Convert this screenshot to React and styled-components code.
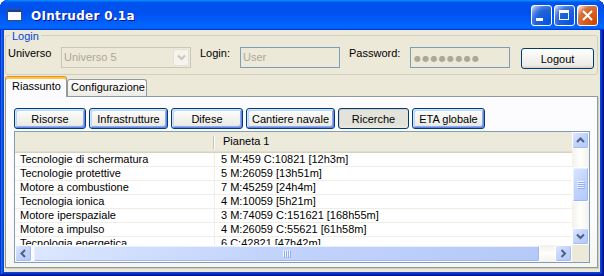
import styled, { createGlobalStyle } from 'styled-components';

const GlobalStyle = createGlobalStyle`
  html, body {
    margin: 0;
    padding: 0;
    background: #fff;
  }
  body {
    font-family: 'Liberation Sans', Arial, sans-serif;
    font-size: 11px;
    color: #000;
  }
`;

const Window = styled.div`
  width: 604px;
  height: 276px;
  box-sizing: border-box;
  display: flex;
  flex-direction: column;
  background: #0842d6;
  border-radius: 8px 8px 0 0;
  overflow: hidden;
  box-shadow: inset -1px -1px #00138c, inset 1px 1px #0831d9, inset -2px -2px #001ea0,
    inset 2px 2px #166aee, inset -3px -3px #003bda, inset 3px 3px #0855dd;
`;

const TitleBar = styled.div`
  height: 30px;
  flex: none;
  display: flex;
  align-items: center;
  padding: 0 6px 0 7px;
  border-radius: 8px 8px 0 0;
  background: linear-gradient(
    180deg,
    #0997ff,
    #0053ee 8%,
    #0050ee 40%,
    #06f 88%,
    #06f 93%,
    #005bff 95%,
    #003dd7 96%,
    #003dd7
  );
`;

const TitleText = styled.div`
  margin-left: 9px;
  margin-top: 1px;
  font-family: 'DejaVu Sans', sans-serif;
  font-weight: bold;
  font-size: 12px;
  color: #fff;
  text-shadow: 1px 1px #0f1089;
  letter-spacing: 0.3px;
`;

const Controls = styled.div`
  margin-left: auto;
  display: flex;
  gap: 2px;
`;

const CtrlBtn = styled.div`
  width: 21px;
  height: 21px;
  box-sizing: border-box;
  border: 1px solid #fff;
  border-radius: 3px;
  display: flex;
  background: ${({ danger }) =>
    danger
      ? 'radial-gradient(circle at 90% 90%, #cc4600 0%, #dc6527 55%, #cd7546 70%, #ffccb2 90%, #fff 100%)'
      : 'radial-gradient(circle at 90% 90%, #0054e9 0%, #2263d5 55%, #4479e4 70%, #a3bbec 90%, #fff 100%)'};
`;

const Client = styled.div`
  flex: 1;
  margin: 0 4px 4px;
  background: #ece9d8;
  display: flex;
  flex-direction: column;
  padding: 0 2px 0 1px;
`;

const Group = styled.div`
  margin-top: 5px;
  border: 1px solid #d0d0bf;
  border-radius: 3px;
  padding: 0 2px 5px;
`;

const GroupTitle = styled.div`
  width: fit-content;
  margin: -6px 0 0 2px;
  padding: 0 2px;
  background: #ece9d8;
  color: #0046d5;
  line-height: 13px;
`;

const Row = styled.div`
  display: flex;
  align-items: flex-start;
  height: 22px;
  margin-top: 4px;
`;

const Label = styled.div`
  width: ${({ w }) => w}px;
  margin-left: ${({ gap }) => gap || 0}px;
  line-height: 13px;
  color: #000;
`;

const Combo = styled.div`
  width: 130px;
  height: 21px;
  box-sizing: border-box;
  border: 1px solid #c9c7ba;
  display: flex;
  align-items: center;
  padding: 0 1px 0 2px;
  color: #aca899;
`;

const ComboText = styled.span`
  flex: 1;
  line-height: 13px;
`;

const ComboBtn = styled.div`
  width: 16px;
  height: 17px;
  box-sizing: border-box;
  border: 1px solid #e4e2d6;
  border-radius: 1px;
  background: #f4f3ee;
  display: flex;
  align-items: center;
  justify-content: center;
`;

const TextBox = styled.div`
  width: 100px;
  height: 21px;
  box-sizing: border-box;
  border: 1px solid #7f9db9;
  padding: 3px 2px 0;
  color: #aca899;
  line-height: 13px;
  white-space: nowrap;
  overflow: hidden;
`;

const Dots = styled.span`
  font-family: 'DejaVu Sans', sans-serif;
  font-size: 8px;
  letter-spacing: 1.3px;
  color: #aca899;
  margin-left: 1px;
`;

const XpButton = styled.button`
  width: ${({ w }) => w}px;
  height: 21px;
  margin: ${({ m }) => m || '0'};
  padding: 0;
  box-sizing: border-box;
  border: 1px solid #003c74;
  border-radius: 3px;
  font-family: 'Liberation Sans', Arial, sans-serif;
  font-size: 11px;
  color: #000;
  background: ${({ pressed }) =>
    pressed
      ? 'linear-gradient(180deg, #e5e4dc, #e3e2da 80%, #eae9e2)'
      : 'linear-gradient(180deg, #fff, #f4f4f0 45%, #ecebe6 85%, #d6d0c5)'};
  box-shadow: ${({ pressed, focus }) =>
    pressed
      ? 'inset 1px 1px #d1ccc1'
      : focus
      ? 'inset 1px 1px #cee7ff, inset -1px -1px #6982ee, inset 2px 2px #bcd4f6, inset -2px -2px #89ade4'
      : 'none'};
`;

const TabStrip = styled.div`
  display: flex;
  align-items: flex-end;
  height: 20px;
  margin-top: 1px;
`;

const Tab = styled.div`
  position: relative;
  z-index: 1;
  box-sizing: border-box;
  width: ${({ w }) => w}px;
  height: ${({ active }) => (active ? 21 : 17)}px;
  margin-bottom: ${({ active }) => (active ? -1 : 0)}px;
  border: 1px solid #919b9c;
  border-bottom: none;
  border-top-color: ${({ active }) => (active ? '#e68b2c' : '#919b9c')};
  border-radius: 3px 3px 0 0;
  padding: ${({ active }) => (active ? '3px 0 0 6px' : '1px 0 0 3px')};
  line-height: 13px;
  background: ${({ active }) =>
    active ? '#fcfcfe' : 'linear-gradient(180deg, #fff, #fafaf8 30%, #ecebe5)'};
  box-shadow: ${({ active }) => (active ? 'inset 0 2px #ffc73c' : 'none')};
`;

const Panel = styled.div`
  height: 172px;
  box-sizing: border-box;
  border: 1px solid #919b9c;
  background: linear-gradient(180deg, #fcfcfe, #fcfcfe 70%, #f6f5f0);
  box-shadow: 1px 1px #d0cebf;
  padding: 11px 7px 4px 8px;
  display: flex;
  flex-direction: column;
  gap: 2px;
`;

const ButtonBar = styled.div`
  display: flex;
  gap: 3px;
`;

const ListView = styled.div`
  height: 132px;
  box-sizing: border-box;
  border: 1px solid #7f9db9;
  background: #fff;
  display: grid;
  grid-template-columns: 1fr 17px;
  grid-template-rows: 1fr 17px;
`;

const Viewport = styled.div`
  overflow: hidden;
  min-width: 0;
`;

const Header = styled.div`
  display: flex;
  height: 21px;
  box-sizing: border-box;
  background: #ebeadb;
  box-shadow: inset 0 -1px #d6d2c2, inset 0 -2px #e2decd;
`;

const HeaderCell = styled.div`
  width: ${({ w }) => (w ? `${w}px` : 'auto')};
  flex: ${({ w }) => (w ? 'none' : '1')};
  padding: 3px 0 0 ${({ pad }) => pad}px;
  box-sizing: border-box;
  line-height: 13px;
`;

const HeaderSep = styled.div`
  width: 1px;
  height: 13px;
  margin-top: 4px;
  background: #c7c5b2;
  border-right: 1px solid #fff;
`;

const ListRow = styled.div`
  display: flex;
  height: 14px;
  box-sizing: border-box;
  border-bottom: 1px solid #efede6;
  line-height: 13px;
  white-space: nowrap;
`;

const Cell = styled.div`
  box-sizing: border-box;
  width: ${({ w }) => (w ? `${w}px` : 'auto')};
  flex: ${({ w }) => (w ? 'none' : '1')};
  padding-left: ${({ pad }) => pad}px;
  border-right: ${({ w }) => (w ? '1px solid #efede6' : 'none')};
`;

const blueFace = 'linear-gradient(135deg, #dce7ff 0%, #c3d4fc 45%, #b5c9f8 100%)';

const VScroll = styled.div`
  display: flex;
  flex-direction: column;
  background: linear-gradient(90deg, #f3f1ec, #fefefb 50%, #f3f1ec);
`;

const HScroll = styled.div`
  display: flex;
  background: linear-gradient(180deg, #f3f1ec, #fefefb 50%, #f3f1ec);
`;

const Track = styled.div`
  flex: 1;
`;

const Arrow = styled.div`
  width: 17px;
  height: 17px;
  flex: none;
  box-sizing: border-box;
  border: 1px solid #fff;
  border-radius: 2px;
  background: ${blueFace};
  box-shadow: inset -1px -1px #a6bdf2;
  display: flex;
  align-items: center;
  justify-content: center;
`;

const Thumb = styled.div`
  flex: none;
  box-sizing: border-box;
  border: 1px solid #fff;
  border-radius: 2px;
  background: ${blueFace};
  box-shadow: inset -1px -1px #a0b8f2, inset 1px 1px #e8efff;
  display: flex;
  align-items: center;
  justify-content: center;
  ${({ vertical, size, offset }) =>
    vertical
      ? `width: 17px; height: ${size}px; margin-top: ${offset}px;`
      : `height: 17px; width: ${size}px; margin-left: ${offset}px;`}
`;

const Corner = styled.div`
  background: #ece9d8;
`;

const Chevron = ({ dir, color = '#4d6185' }) => {
  const pts = {
    up: '1,5 4.5,1.5 8,5',
    down: '1,1.5 4.5,5 8,1.5',
    left: '5,1 1.5,4.5 5,8',
    right: '1.5,1 5,4.5 1.5,8',
  }[dir];
  const horiz = dir === 'left' || dir === 'right';
  return (
    <svg width={horiz ? 7 : 9} height={horiz ? 9 : 7} viewBox={horiz ? '0 0 7 9' : '0 0 9 7'}>
      <polyline points={pts} fill="none" stroke={color} strokeWidth="2" />
    </svg>
  );
};

const Grip = ({ vertical }) => (
  <svg width={8} height={8} viewBox="0 0 8 8">
    {[0, 2, 4, 6].map((o) =>
      vertical ? (
        <g key={o}>
          <line x1="0" y1={o + 0.5} x2="7" y2={o + 0.5} stroke="#eef4fe" />
          <line x1="1" y1={o + 1.5} x2="8" y2={o + 1.5} stroke="#8caef2" />
        </g>
      ) : (
        <g key={o}>
          <line x1={o + 0.5} y1="0" x2={o + 0.5} y2="7" stroke="#eef4fe" />
          <line x1={o + 1.5} y1="1" x2={o + 1.5} y2="8" stroke="#8caef2" />
        </g>
      )
    )}
  </svg>
);

const rows = [
  ['Tecnologie di schermatura', '5 M:459 C:10821 [12h3m]'],
  ['Tecnologie protettive', '5 M:26059 [13h51m]'],
  ['Motore a combustione', '7 M:45259 [24h4m]'],
  ['Tecnologia ionica', '4 M:10059 [5h21m]'],
  ['Motore iperspaziale', '3 M:74059 C:151621 [168h55m]'],
  ['Motore a impulso', '4 M:26059 C:55621 [61h58m]'],
  ['Tecnologia energetica', '6 C:42821 [47h42m]'],
];

const sections = [
  ['Risorse', 72],
  ['Infrastrutture', 79],
  ['Difese', 72],
  ['Cantiere navale', 89],
  ['Ricerche', 71, true],
  ['ETA globale', 73],
];

const App = () => (
  <>
    <GlobalStyle />
    <Window>
      <TitleBar>
        <svg width="15" height="12" viewBox="0 0 15 12">
          <rect x="0.5" y="0.5" width="14" height="11" fill="#fff" stroke="#3a4a7a" />
          <rect x="1" y="1" width="13" height="2" fill="#1c3f94" />
        </svg>
        <TitleText>OIntruder 0.1a</TitleText>
        <Controls>
          <CtrlBtn>
            <svg width="19" height="19" viewBox="0 0 19 19">
              <rect x="4" y="12" width="7" height="3" fill="#fff" />
            </svg>
          </CtrlBtn>
          <CtrlBtn>
            <svg width="19" height="19" viewBox="0 0 19 19">
              <rect x="4.5" y="4.5" width="9" height="9" fill="none" stroke="#fff" />
              <rect x="4" y="4" width="10" height="3" fill="#fff" />
            </svg>
          </CtrlBtn>
          <CtrlBtn danger>
            <svg width="19" height="19" viewBox="0 0 19 19">
              <path d="M5 5 L14 14 M14 5 L5 14" stroke="#fff" strokeWidth="2" />
            </svg>
          </CtrlBtn>
        </Controls>
      </TitleBar>
      <Client>
        <Group>
          <GroupTitle>Login</GroupTitle>
          <Row>
            <Label w={53}>Universo</Label>
            <Combo>
              <ComboText>Universo 5</ComboText>
              <ComboBtn>
                <Chevron dir="down" color="#c9c7ba" />
              </ComboBtn>
            </Combo>
            <Label w={40} gap={9}>
              Login:
            </Label>
            <TextBox>User</TextBox>
            <Label w={61} gap={9}>
              Password:
            </Label>
            <TextBox>
              <Dots>●●●●●●●●</Dots>
            </TextBox>
            <XpButton w={73} m="1px 0 0 11px">
              Logout
            </XpButton>
          </Row>
        </Group>
        <TabStrip>
          <Tab active w={62}>
            Riassunto
          </Tab>
          <Tab w={80}>Configurazione</Tab>
        </TabStrip>
        <Panel>
          <ButtonBar>
            {sections.map(([name, w, pressed]) => (
              <XpButton key={name} w={w} pressed={pressed} focus={!pressed}>
                {name}
              </XpButton>
            ))}
          </ButtonBar>
          <ListView>
            <Viewport>
              <Header>
                <HeaderCell w={198} pad={5} />
                <HeaderSep />
                <HeaderCell pad={8}>Pianeta 1</HeaderCell>
              </Header>
              {rows.map(([name, value]) => (
                <ListRow key={name}>
                  <Cell w={200} pad={5}>
                    {name}
                  </Cell>
                  <Cell pad={6}>{value}</Cell>
                </ListRow>
              ))}
            </Viewport>
            <VScroll>
              <Arrow>
                <Chevron dir="up" />
              </Arrow>
              <Thumb vertical size={35} offset={18}>
                <Grip vertical />
              </Thumb>
              <Track />
              <Arrow>
                <Chevron dir="down" />
              </Arrow>
            </VScroll>
            <HScroll>
              <Arrow>
                <Chevron dir="left" />
              </Arrow>
              <Thumb size={507} offset={1}>
                <Grip />
              </Thumb>
              <Track />
              <Arrow>
                <Chevron dir="right" />
              </Arrow>
            </HScroll>
            <Corner />
          </ListView>
        </Panel>
      </Client>
    </Window>
  </>
);

export default App;
